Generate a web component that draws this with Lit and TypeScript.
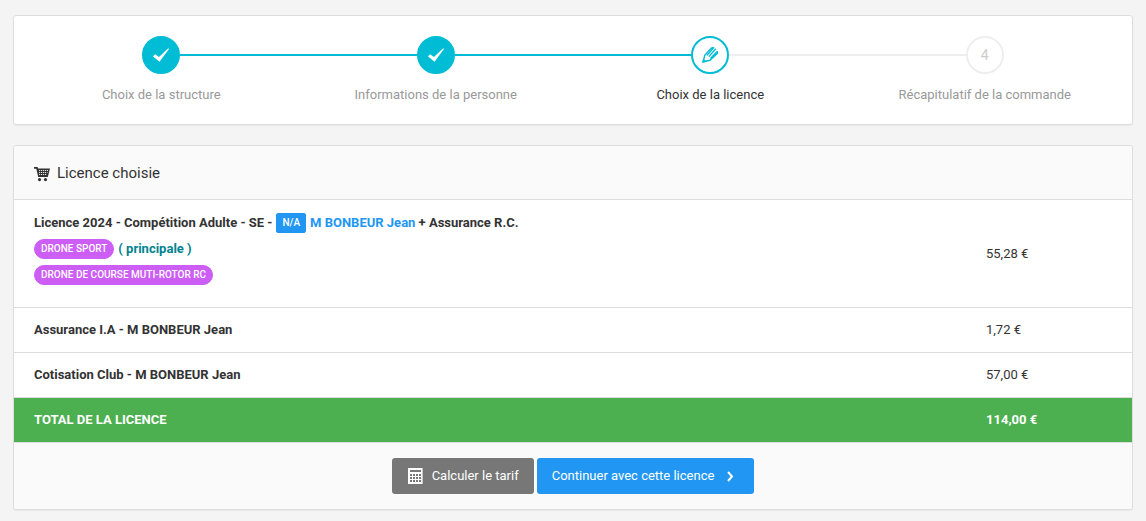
import { LitElement, html, css, nothing } from "lit";
import { customElement, property } from "lit/decorators.js";
import { classMap } from "lit/directives/class-map.js";

type StepState = "done" | "current" | "disabled";

interface Step {
  label: string;
  state: StepState;
}

const checkIcon = html`<svg class="icon" viewBox="0 0 16 16" aria-hidden="true">
  <path fill="currentColor" d="M0 9.4 2 7.3 6 10.1 15.2 1.2 16 2.1 6.5 14.8z" />
</svg>`;

const pencilIcon = html`<svg class="icon" viewBox="0 0 16 16" aria-hidden="true">
  <path
    fill="none"
    stroke="currentColor"
    stroke-width="1.4"
    stroke-linejoin="round"
    d="M1.2 14.8 2.8 8.2 9 1.4Q10 .6 11.6.8L5 8.4M1.2 14.8 8 13.2 14.8 7Q15.6 6 15.2 4.6L8.4 11.4M13.8 1.8 6.8 9.6"
  />
  <path fill="currentColor" d="M0 16 1.2 11.4 4.6 14.8z" />
</svg>`;

const cartIcon = html`<svg class="icon" viewBox="0 0 16 16" aria-hidden="true">
  <path fill="currentColor" d="M0 1h3.6l.5 1.6H16L13.8 11H4.2L2.3 2.8H0z" />
  <circle fill="currentColor" cx="5.5" cy="13.6" r="1.6" />
  <circle fill="currentColor" cx="11.5" cy="13.6" r="1.6" />
  <path
    stroke="#fafafa"
    stroke-width=".9"
    fill="none"
    d="M5 4.5H14M5 6.5H13.5M5 8.5H13"
    stroke-dasharray="1.2 .8"
  />
</svg>`;

const calculatorIcon = html`<svg class="icon" viewBox="0 0 16 16" aria-hidden="true">
  <path
    fill="currentColor"
    fill-rule="evenodd"
    d="M1 0h14.6v16H1zM3 2v2h11V2zM3 6v2h2V6zM6 6v2h2V6zM9 6v2h2V6zM12 6v2h2V6zM3 9v2h2V9zM6 9v2h2V9zM9 9v2h2V9zM12 9v2h2V9zM3 12v2h2v-2zM6 12v2h2v-2zM9 12v2h2v-2zM12 12v2h2v-2z"
  />
</svg>`;

const chevronIcon = html`<svg class="icon" viewBox="0 0 16 16" aria-hidden="true">
  <path fill="none" stroke="currentColor" stroke-width="2" d="M5 4 9 8.5 5 13" />
</svg>`;

@customElement("wizard-steps")
export class WizardSteps extends LitElement {
  @property({ attribute: false }) steps: Step[] = [];

  static styles = css`
    :host {
      display: block;
    }
    .steps {
      display: grid;
      grid-auto-flow: column;
      grid-auto-columns: 1fr;
      margin: 0;
      padding: 0;
      list-style: none;
    }
    .step {
      display: grid;
      grid-template-columns: 1fr auto 1fr;
      align-items: center;
      row-gap: 11px;
      color: #999;
      text-align: center;
    }
    .line {
      height: 2px;
      background: #00bcd4;
    }
    .line.off {
      background: #eee;
    }
    .line.none {
      background: none;
    }
    .number {
      display: flex;
      align-items: center;
      justify-content: center;
      box-sizing: border-box;
      width: 38px;
      height: 38px;
      border: 2px solid #eee;
      border-radius: 50%;
      background: #fff;
      color: #ccc;
      font-size: 14px;
    }
    .number.done {
      border-color: #00bcd4;
      background: #00bcd4;
      color: #fff;
    }
    .number.current {
      border-color: #00bcd4;
      color: #00bcd4;
    }
    .label {
      grid-column: 1 / -1;
    }
    .label.current {
      color: #333;
    }
    .icon {
      display: block;
      width: 16px;
      height: 16px;
    }
  `;

  private renderMark(step: Step, index: number) {
    if (step.state === "done") return checkIcon;
    if (step.state === "current") return pencilIcon;
    return index + 1;
  }

  render() {
    const last = this.steps.length - 1;
    return html`<ol class="steps">
      ${this.steps.map((step, i) => {
        const state = { [step.state]: true };
        return html`<li class="step" aria-current=${step.state === "current" ? "step" : nothing}>
          <span class=${classMap({ line: true, none: i === 0, off: step.state === "disabled" })}></span>
          <span class=${classMap({ number: true, ...state })}>${this.renderMark(step, i)}</span>
          <span class=${classMap({ line: true, none: i === last, off: step.state !== "done" })}></span>
          <span class=${classMap({ label: true, ...state })}>${step.label}</span>
        </li>`;
      })}
    </ol>`;
  }
}

@customElement("app-root")
export class AppRoot extends LitElement {
  static styles = css`
    :host {
      display: block;
      box-sizing: border-box;
      min-height: 100vh;
      padding: 15px 13px 11px;
      background: #f4f4f4;
      color: #333;
      font-family: Roboto, sans-serif;
      font-size: 13px;
      line-height: 20px;
    }
    .panel {
      border: 1px solid #ddd;
      border-radius: 3px;
      background: #fff;
      box-shadow: 0 1px 1px rgba(0, 0, 0, 0.05);
      overflow: hidden;
    }
    .wizard {
      margin-bottom: 20px;
      padding: 20px 10px 19px;
    }
    .heading {
      display: flex;
      align-items: center;
      gap: 7px;
      padding: 16px 20px 14px;
      border-bottom: 1px solid #ddd;
      background: #fafafa;
    }
    .title {
      margin: 0;
      font-size: 15px;
      font-weight: 400;
      line-height: 23px;
    }
    .lines {
      width: 100%;
      border-collapse: collapse;
      table-layout: fixed;
    }
    .name,
    .price {
      padding: 12px 20px;
      border-bottom: 1px solid #ddd;
      text-align: left;
      font-weight: 700;
    }
    .price {
      width: 126px;
      font-weight: 400;
    }
    .main {
      padding-top: 13px;
      padding-bottom: 22px;
    }
    .total .name,
    .total .price {
      background: #4caf50;
      color: #fff;
      font-weight: 700;
    }
    .row {
      display: flex;
      align-items: center;
      gap: 4px;
      margin-top: 6px;
    }
    .row:first-child {
      margin-top: 0;
    }
    .badge {
      padding: 0 5px;
      border: 1px solid #2196f3;
      border-radius: 2px;
      background: #2196f3;
      color: #fff;
      font-size: 10px;
      font-weight: 500;
      line-height: 18px;
    }
    .pill {
      padding: 0 6px;
      border-color: #cc5df5;
      border-radius: 10px;
      background: #cc5df5;
    }
    .person {
      color: #2196f3;
      text-decoration: none;
    }
    .primary-note {
      color: #00838f;
    }
    .actions {
      display: flex;
      justify-content: center;
      gap: 3px;
      padding: 15px 20px;
      background: #fafafa;
    }
    .button {
      display: flex;
      align-items: center;
      gap: 9px;
      padding: 8px 15px;
      border: 0;
      border-radius: 3px;
      background: #777;
      color: #fff;
      font: inherit;
      cursor: pointer;
    }
    .button.next {
      background: #2196f3;
    }
    .icon {
      display: block;
      flex: none;
      width: 16px;
      height: 16px;
    }
  `;

  private steps: Step[] = [
    { label: "Choix de la structure", state: "done" },
    { label: "Informations de la personne", state: "done" },
    { label: "Choix de la licence", state: "current" },
    { label: "Récapitulatif de la commande", state: "disabled" },
  ];

  render() {
    return html`
      <section class="panel wizard">
        <wizard-steps .steps=${this.steps}></wizard-steps>
      </section>
      <section class="panel">
        <header class="heading">
          ${cartIcon}
          <h1 class="title">Licence choisie</h1>
        </header>
        <table class="lines">
          <tbody>
            <tr>
              <th class="name main" scope="row">
                <div class="row">
                  <span>Licence 2024 - Compétition Adulte - SE -</span>
                  <span class="badge">N/A</span>
                  <span><a class="person" href="#">M BONBEUR Jean</a> + Assurance R.C.</span>
                </div>
                <div class="row">
                  <span class="badge pill">DRONE SPORT</span>
                  <span class="primary-note">( principale )</span>
                </div>
                <div class="row">
                  <span class="badge pill">DRONE DE COURSE MUTI-ROTOR RC</span>
                </div>
              </th>
              <td class="price">55,28 €</td>
            </tr>
            <tr>
              <th class="name" scope="row">Assurance I.A - M BONBEUR Jean</th>
              <td class="price">1,72 €</td>
            </tr>
            <tr>
              <th class="name" scope="row">Cotisation Club - M BONBEUR Jean</th>
              <td class="price">57,00 €</td>
            </tr>
            <tr class="total">
              <th class="name" scope="row">TOTAL DE LA LICENCE</th>
              <td class="price">114,00 €</td>
            </tr>
          </tbody>
        </table>
        <footer class="actions">
          <button class="button" type="button">${calculatorIcon} Calculer le tarif</button>
          <button class="button next" type="button">Continuer avec cette licence ${chevronIcon}</button>
        </footer>
      </section>
    `;
  }
}
